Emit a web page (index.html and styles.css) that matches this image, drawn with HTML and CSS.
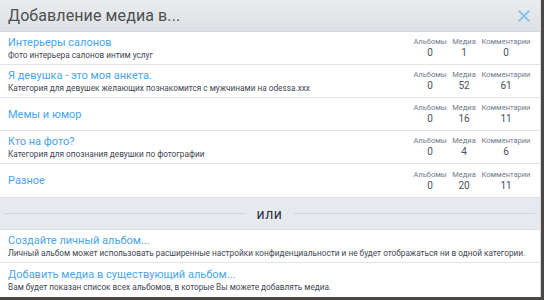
FILE: index.html
```html
<!DOCTYPE html>
<html lang="ru">
<head>
<meta charset="utf-8">
<link rel="stylesheet" href="styles.css">
</head>
<body>
<div class="modal">
  <div class="header">
    <h1 class="title">Добавление медиа в...</h1>
    <span class="close">
      <svg width="12" height="12" viewBox="0 0 12 12"><path d="M1.5 1.5L10.5 10.5M10.5 1.5L1.5 10.5" stroke="#8cc3ee" stroke-width="2" stroke-linecap="square"/></svg>
    </span>
  </div>
  <div class="list">
    <div class="row">
      <div class="main"><a class="name">Интерьеры салонов</a><div class="desc">Фото интерьера салонов интим услуг</div></div>
      <dl class="stats"><div class="stat s1"><dt>Альбомы</dt><dd>0</dd></div><div class="stat s2"><dt>Медиа</dt><dd>1</dd></div><div class="stat s3"><dt>Комментарии</dt><dd>0</dd></div></dl>
    </div>
    <div class="row">
      <div class="main"><a class="name">Я девушка - это моя анкета.</a><div class="desc">Категория для девушек желающих познакомится с мужчинами на odessa.xxx</div></div>
      <dl class="stats"><div class="stat s1"><dt>Альбомы</dt><dd>0</dd></div><div class="stat s2"><dt>Медиа</dt><dd>52</dd></div><div class="stat s3"><dt>Комментарии</dt><dd>61</dd></div></dl>
    </div>
    <div class="row">
      <div class="main"><a class="name">Мемы и юмор</a></div>
      <dl class="stats"><div class="stat s1"><dt>Альбомы</dt><dd>0</dd></div><div class="stat s2"><dt>Медиа</dt><dd>16</dd></div><div class="stat s3"><dt>Комментарии</dt><dd>11</dd></div></dl>
    </div>
    <div class="row">
      <div class="main"><a class="name">Кто на фото?</a><div class="desc">Категория для опознания девушки по фотографии</div></div>
      <dl class="stats"><div class="stat s1"><dt>Альбомы</dt><dd>0</dd></div><div class="stat s2"><dt>Медиа</dt><dd>4</dd></div><div class="stat s3"><dt>Комментарии</dt><dd>6</dd></div></dl>
    </div>
    <div class="row last">
      <div class="main"><a class="name">Разное</a></div>
      <dl class="stats"><div class="stat s1"><dt>Альбомы</dt><dd>0</dd></div><div class="stat s2"><dt>Медиа</dt><dd>20</dd></div><div class="stat s3"><dt>Комментарии</dt><dd>11</dd></div></dl>
    </div>
  </div>
  <div class="or"><span class="line"></span><span class="or-text">или</span><span class="line"></span></div>
  <div class="list">
    <div class="row opt">
      <div class="main"><a class="name">Создайте личный альбом...</a><div class="desc">Личный альбом может использовать расширенные настройки конфиденциальности и не будет отображаться ни в одной категории.</div></div>
    </div>
    <div class="row opt last">
      <div class="main"><a class="name">Добавить медиа в существующий альбом...</a><div class="desc">Вам будет показан список всех альбомов, в которые Вы можете добавлять медиа.</div></div>
    </div>
  </div>
</div>
</body>
</html>
```
FILE: styles.css
```css
* { box-sizing: border-box; }
html, body { margin: 0; padding: 0; }
body {
  width: 544px;
  height: 300px;
  overflow: hidden;
  background: #4a4744;
  font-family: Roboto, "Noto Sans", sans-serif;
}
.modal {
  width: 541px;
  background: #fff;
  border-right: 1px solid #d8dadc;
}
.header {
  height: 32px;
  display: flex;
  align-items: center;
  justify-content: space-between;
  padding: 0 10px 0 8px;
  background: linear-gradient(#e9ecef, #dde1e5);
  border-bottom: 1px solid #d3d8dd;
}
.title {
  margin: 0;
  font-size: 16px;
  font-weight: 400;
  color: #505050;
  letter-spacing: 0.1px;
}
.close { display: flex; }
.row {
  height: 33px;
  display: flex;
  align-items: center;
  justify-content: space-between;
  padding: 0 9px 0 8px;
  border-bottom: 1px solid #e1e4e7;
}
.row.last { border-bottom: none; }
.main { display: flex; flex-direction: column; }
.name {
  font-size: 11px;
  line-height: 15px;
  color: #4aa5ea;
}
.desc {
  font-size: 8.25px;
  line-height: 11px;
  color: #3f4653;
}
.stats {
  margin: 0;
  display: flex;
}
.stat { text-align: center; }
.s1 { width: 38px; }
.s2 { width: 30px; }
.s3 { width: 50px; margin-left: 2px; }
.stat dt {
  font-size: 7.5px;
  line-height: 10px;
  color: #707b8b;
}
.stat dd {
  margin: 0;
  font-size: 10px;
  line-height: 12px;
  color: #4a5160;
}
.or {
  height: 33px;
  display: flex;
  align-items: center;
  padding: 0 5px 0 4px;
  background: #e6eaee;
  border-top: 1px solid #dde1e5;
  border-bottom: 1px solid #dde1e5;
}
.line { flex: 1; height: 1px; background: #cfd5db; }
.or-text {
  padding: 0 11px;
  font-size: 14px;
  color: #2b3245;
  letter-spacing: 0.6px;
}
.opt { height: 33px; }
.opt.last { height: 34px; }
```
